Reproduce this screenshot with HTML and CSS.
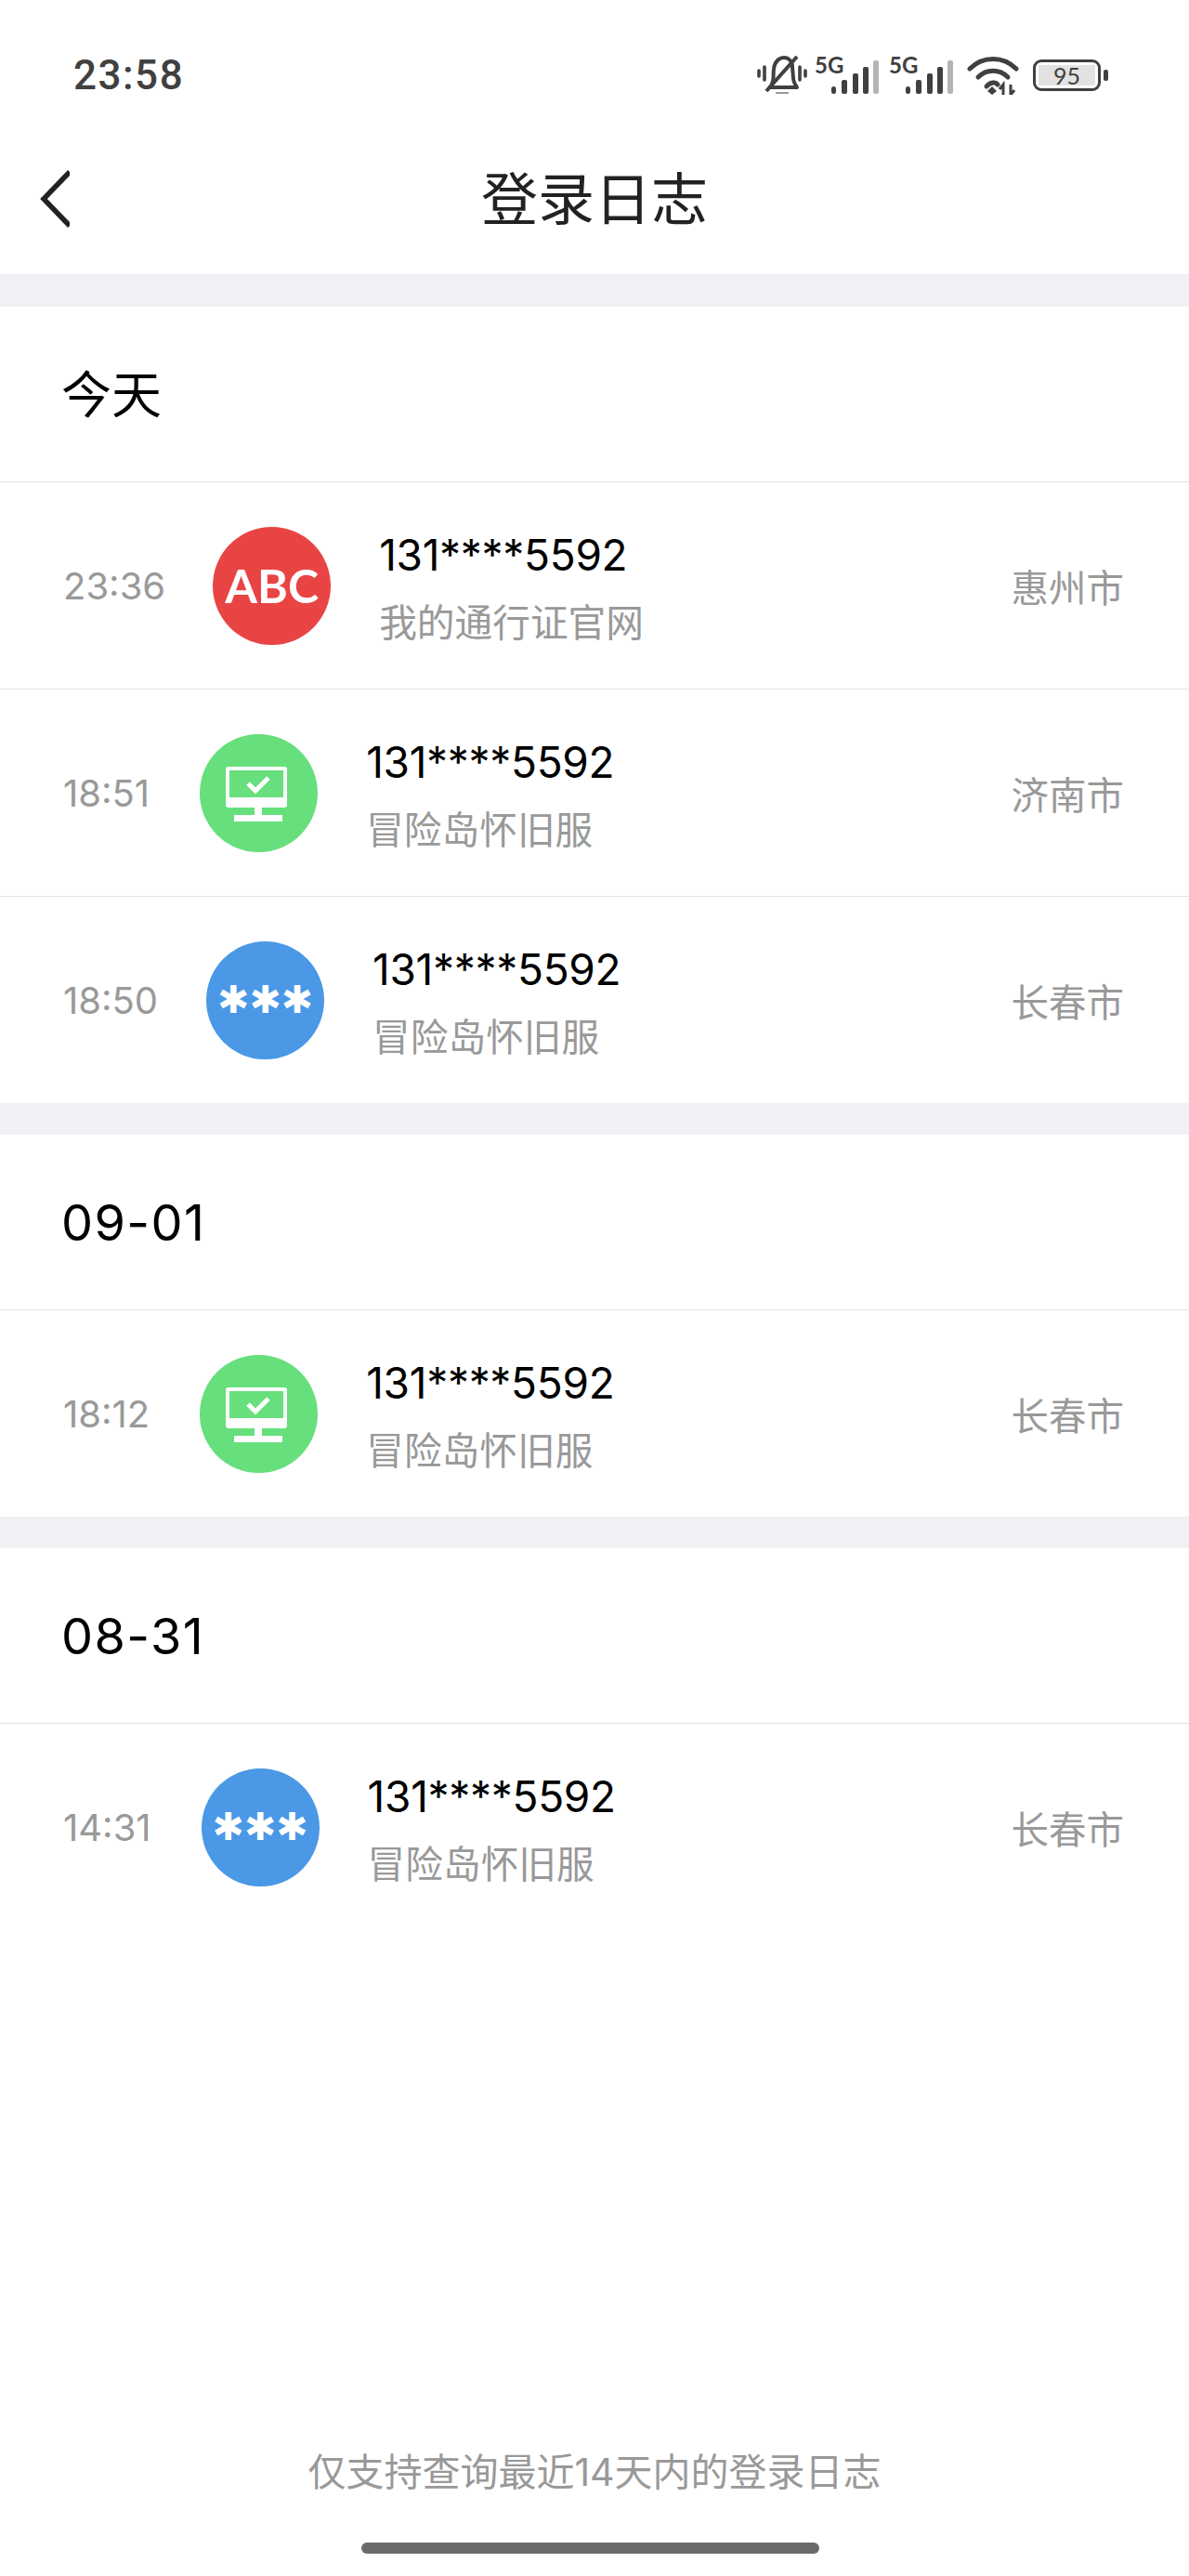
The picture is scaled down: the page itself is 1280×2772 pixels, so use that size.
FILE: index.html
```html
<!DOCTYPE html>
<html lang="zh-CN">
<head>
    <meta charset="UTF-8">
    <meta name="viewport" content="width=device-width, initial-scale=1.0">
    <title>登录日志</title>
    <link rel="stylesheet" href="styles.css">
</head>
<body>
<div class="page">
    <div class="status-bar">
        <span class="clock">23:58</span>
        <div class="status-icons">
            <svg class="ic-mute" width="54" height="42" viewBox="0 0 54 42">
                <path d="M15 32 C19 27 17 20 18 14 C19 6 24 2 29 2 C34 2 38 6 38 12 L39 24 C39 28 41 31 43 34 L12 34" fill="none" stroke="#404040" stroke-width="4" stroke-linejoin="round"/>
                <path d="M10 38 L43 1" stroke="#404040" stroke-width="4"/>
                <path d="M20 40 H34" stroke="#999" stroke-width="2"/>
                <path d="M2 16 V22 M52 16 V22 M8 12 V26 M46 12 V26" stroke="#404040" stroke-width="3.6" stroke-linecap="round"/>
            </svg>
            <svg class="ic-signal" width="71" height="48" viewBox="0 -6 71 48">
                <text class="net-label" x="0" y="19">5G</text>
                <rect x="18" y="33" width="5" height="8" rx="2.5" fill="#404040"/>
                <rect x="29" y="26" width="6" height="15" rx="2" fill="#404040"/>
                <rect x="41" y="19" width="6" height="22" rx="2" fill="#404040"/>
                <rect x="52" y="12" width="6" height="29" rx="2" fill="#404040"/>
                <rect x="63" y="5" width="6" height="36" rx="2" fill="#b5b5b5"/>
            </svg>
            <svg class="ic-signal" width="71" height="48" viewBox="0 -6 71 48">
                <text class="net-label" x="0" y="19">5G</text>
                <rect x="18" y="33" width="5" height="8" rx="2.5" fill="#404040"/>
                <rect x="29" y="26" width="6" height="15" rx="2" fill="#404040"/>
                <rect x="41" y="19" width="6" height="22" rx="2" fill="#404040"/>
                <rect x="52" y="12" width="6" height="29" rx="2" fill="#404040"/>
                <rect x="63" y="5" width="6" height="36" rx="2" fill="#b5b5b5"/>
            </svg>
            <svg class="ic-wifi" width="56" height="42" viewBox="0 0 56 42">
                <path d="M3 14 C17 0 39 0 53 14" fill="none" stroke="#404040" stroke-width="5" stroke-linecap="round"/>
                <path d="M12 23 C21 14 35 14 44 23" fill="none" stroke="#404040" stroke-width="5" stroke-linecap="round"/>
                <path d="M21 33 C25 28 31 28 33 31" fill="none" stroke="#404040" stroke-width="5" stroke-linecap="round"/>
                <path d="M22 38 L27 33 L32 38 L27 42 Z" fill="#404040"/>
                <path d="M39 42 V31 L35 36 M47 31 V42 L51 37" fill="none" stroke="#404040" stroke-width="3"/>
            </svg>
            <div class="battery">
                <div class="battery-body"><span class="battery-level">95</span></div>
                <div class="battery-nub"></div>
            </div>
        </div>
    </div>

    <div class="nav-bar">
        <svg class="back" width="32" height="62" viewBox="0 0 32 62">
            <path d="M32 2 L4 31 L32 60" fill="none" stroke="#222" stroke-width="5.5"/>
        </svg>
        <h1 class="nav-title">登录日志</h1>
    </div>

    <div class="section section-first">
        <div class="section-title section-title-cjk">今天</div>
        <div class="row">
            <span class="row-time row-time-tight">23:36</span>
            <div class="avatar avatar-red"><span class="abc">ABC</span></div>
            <div class="row-info">
                <div class="phone">131****5592</div>
                <div class="source">我的通行证官网</div>
            </div>
            <span class="city">惠州市</span>
        </div>
        <div class="row">
            <span class="row-time">18:51</span>
            <div class="avatar avatar-green">
                <svg width="127" height="127" viewBox="0 0 127 127">
                    <path fill-rule="evenodd" fill="#fff" d="M31 35 H91 Q94 35 94 38 V76 Q94 79 91 79 H31 Q28 79 28 76 V38 Q28 35 31 35 Z M32 39 V68 H90 V39 Z"/>
                    <rect x="59" y="79" width="8" height="9" fill="#fff"/>
                    <rect x="37" y="87" width="52" height="7" fill="#fff"/>
                    <path d="M52 53 L60 61 L74 47" fill="none" stroke="#fff" stroke-width="5"/>
                </svg>
            </div>
            <div class="row-info">
                <div class="phone">131****5592</div>
                <div class="source">冒险岛怀旧服</div>
            </div>
            <span class="city">济南市</span>
        </div>
        <div class="row row-last">
            <span class="row-time row-time-mid">18:50</span>
            <div class="avatar avatar-blue"><span class="stars">✱✱✱</span></div>
            <div class="row-info">
                <div class="phone">131****5592</div>
                <div class="source">冒险岛怀旧服</div>
            </div>
            <span class="city">长春市</span>
        </div>
    </div>

    <div class="section">
        <div class="section-title">09-01</div>
        <div class="row row-last">
            <span class="row-time">18:12</span>
            <div class="avatar avatar-green">
                <svg width="127" height="127" viewBox="0 0 127 127">
                    <path fill-rule="evenodd" fill="#fff" d="M31 35 H91 Q94 35 94 38 V76 Q94 79 91 79 H31 Q28 79 28 76 V38 Q28 35 31 35 Z M32 39 V68 H90 V39 Z"/>
                    <rect x="59" y="79" width="8" height="9" fill="#fff"/>
                    <rect x="37" y="87" width="52" height="7" fill="#fff"/>
                    <path d="M52 53 L60 61 L74 47" fill="none" stroke="#fff" stroke-width="5"/>
                </svg>
            </div>
            <div class="row-info">
                <div class="phone">131****5592</div>
                <div class="source">冒险岛怀旧服</div>
            </div>
            <span class="city">长春市</span>
        </div>
    </div>

    <div class="section">
        <div class="section-title">08-31</div>
        <div class="row row-last">
            <span class="row-time">14:31</span>
            <div class="avatar avatar-blue"><span class="stars">✱✱✱</span></div>
            <div class="row-info">
                <div class="phone">131****5592</div>
                <div class="source">冒险岛怀旧服</div>
            </div>
            <span class="city">长春市</span>
        </div>
    </div>

    <p class="footer-note">仅支持查询最近14天内的登录日志</p>
    <div class="home-bar"></div>
</div>
</body>
</html>
```

FILE: styles.css
```css
* {
    box-sizing: border-box;
}

body {
    margin: 0;
    background-color: #ffffff;
    font-family: Inter, "Noto Sans CJK SC", sans-serif;
    color: #000;
}

.page {
    height: 2772px;
    display: flex;
    flex-direction: column;
    overflow: hidden;
}

/* Status bar */
.status-bar {
    height: 160px;
    padding: 60px 87px 0 79px;
    display: flex;
    justify-content: space-between;
    align-items: flex-start;
}

.clock {
    font-family: Roboto, sans-serif;
    font-weight: 500;
    font-size: 44px;
    line-height: 42px;
    letter-spacing: 1.5px;
    color: #404040;
}

.status-icons {
    display: flex;
    align-items: flex-start;
    gap: 8px;
}

.ic-signal {
    margin-top: -6px;
}

.ic-signal + .ic-signal {
    margin-left: 1px;
}

.ic-wifi {
    margin-left: 5px;
}

.net-label {
    font-family: Lato, sans-serif;
    font-weight: 700;
    font-size: 24px;
    fill: #404040;
}

.battery {
    display: flex;
    align-items: center;
    margin: 4px 0 0 7px;
}

.battery-body {
    width: 73px;
    height: 34px;
    border: 3px solid #404040;
    border-radius: 9px;
    padding: 3px;
    display: flex;
}

.battery-level {
    flex: 1;
    background-color: #e2e2e2;
    font-family: Lato, sans-serif;
    font-size: 25px;
    line-height: 22px;
    text-align: center;
    color: #404040;
}

.battery-nub {
    width: 5px;
    height: 12px;
    margin-left: 3px;
    border-radius: 2px;
    background-color: #404040;
}

/* Nav */
.nav-bar {
    height: 135px;
    padding-left: 43px;
    display: flex;
    align-items: center;
    position: relative;
}

.back {
    margin-top: -28px;
}

.nav-title {
    position: absolute;
    left: 0;
    right: 0;
    top: 17px;
    margin: 0;
    text-align: center;
    font-size: 61px;
    line-height: 76px;
    font-weight: 400;
    color: #222;
}

/* Groups */
.section {
    border-top: 34px solid #f0f0f5;
}

.section-first {
    border-top-width: 35px;
}

.section-title {
    height: 189px;
    padding-left: 66px;
    display: flex;
    align-items: center;
    font-size: 54px;
    letter-spacing: 1.4px;
    border-bottom: 1px solid #e2e2e2;
}

.section-title-cjk {
    padding-bottom: 5px;
    letter-spacing: 0;
}

.row {
    height: 223px;
    padding: 0 70px 0 68px;
    display: flex;
    align-items: center;
    border-bottom: 1px solid #e2e2e2;
}

.row-last {
    height: 222px;
    border-bottom: none;
}

.row-time {
    margin-right: 54px;
    font-size: 40px;
    color: #999;
}

.row-time-tight {
    margin-right: 51px;
}

.row-time-mid {
    margin-right: 52px;
}

.avatar {
    width: 127px;
    height: 127px;
    margin-right: 52px;
    border-radius: 50%;
    display: flex;
    align-items: center;
    justify-content: center;
    color: #fff;
}

.avatar-red {
    background-color: #e94444;
}

.avatar-green {
    background-color: #66df7c;
}

.avatar-blue {
    background-color: #4a98e6;
}

.abc {
    font-family: Lato, sans-serif;
    font-weight: 700;
    font-size: 50px;
}

.stars {
    font-family: "DejaVu Sans", sans-serif;
    font-weight: 700;
    font-size: 41px;
}

.row-info {
    flex: 1;
    padding-top: 6px;
}

.phone {
    font-size: 46px;
    line-height: 60px;
    letter-spacing: -0.3px;
}

.source {
    margin-top: 16px;
    font-size: 40.7px;
    line-height: 56px;
    color: #999;
}

.city {
    font-size: 40.5px;
    color: #999;
}

.footer-note {
    margin: auto 0 0;
    text-align: center;
    font-size: 41px;
    line-height: 56px;
    color: #999;
}

.home-bar {
    width: 493px;
    height: 12px;
    margin: 48px 0 24px 389px;
    border-radius: 6px;
    background-color: #6b6b6b;
}
```
